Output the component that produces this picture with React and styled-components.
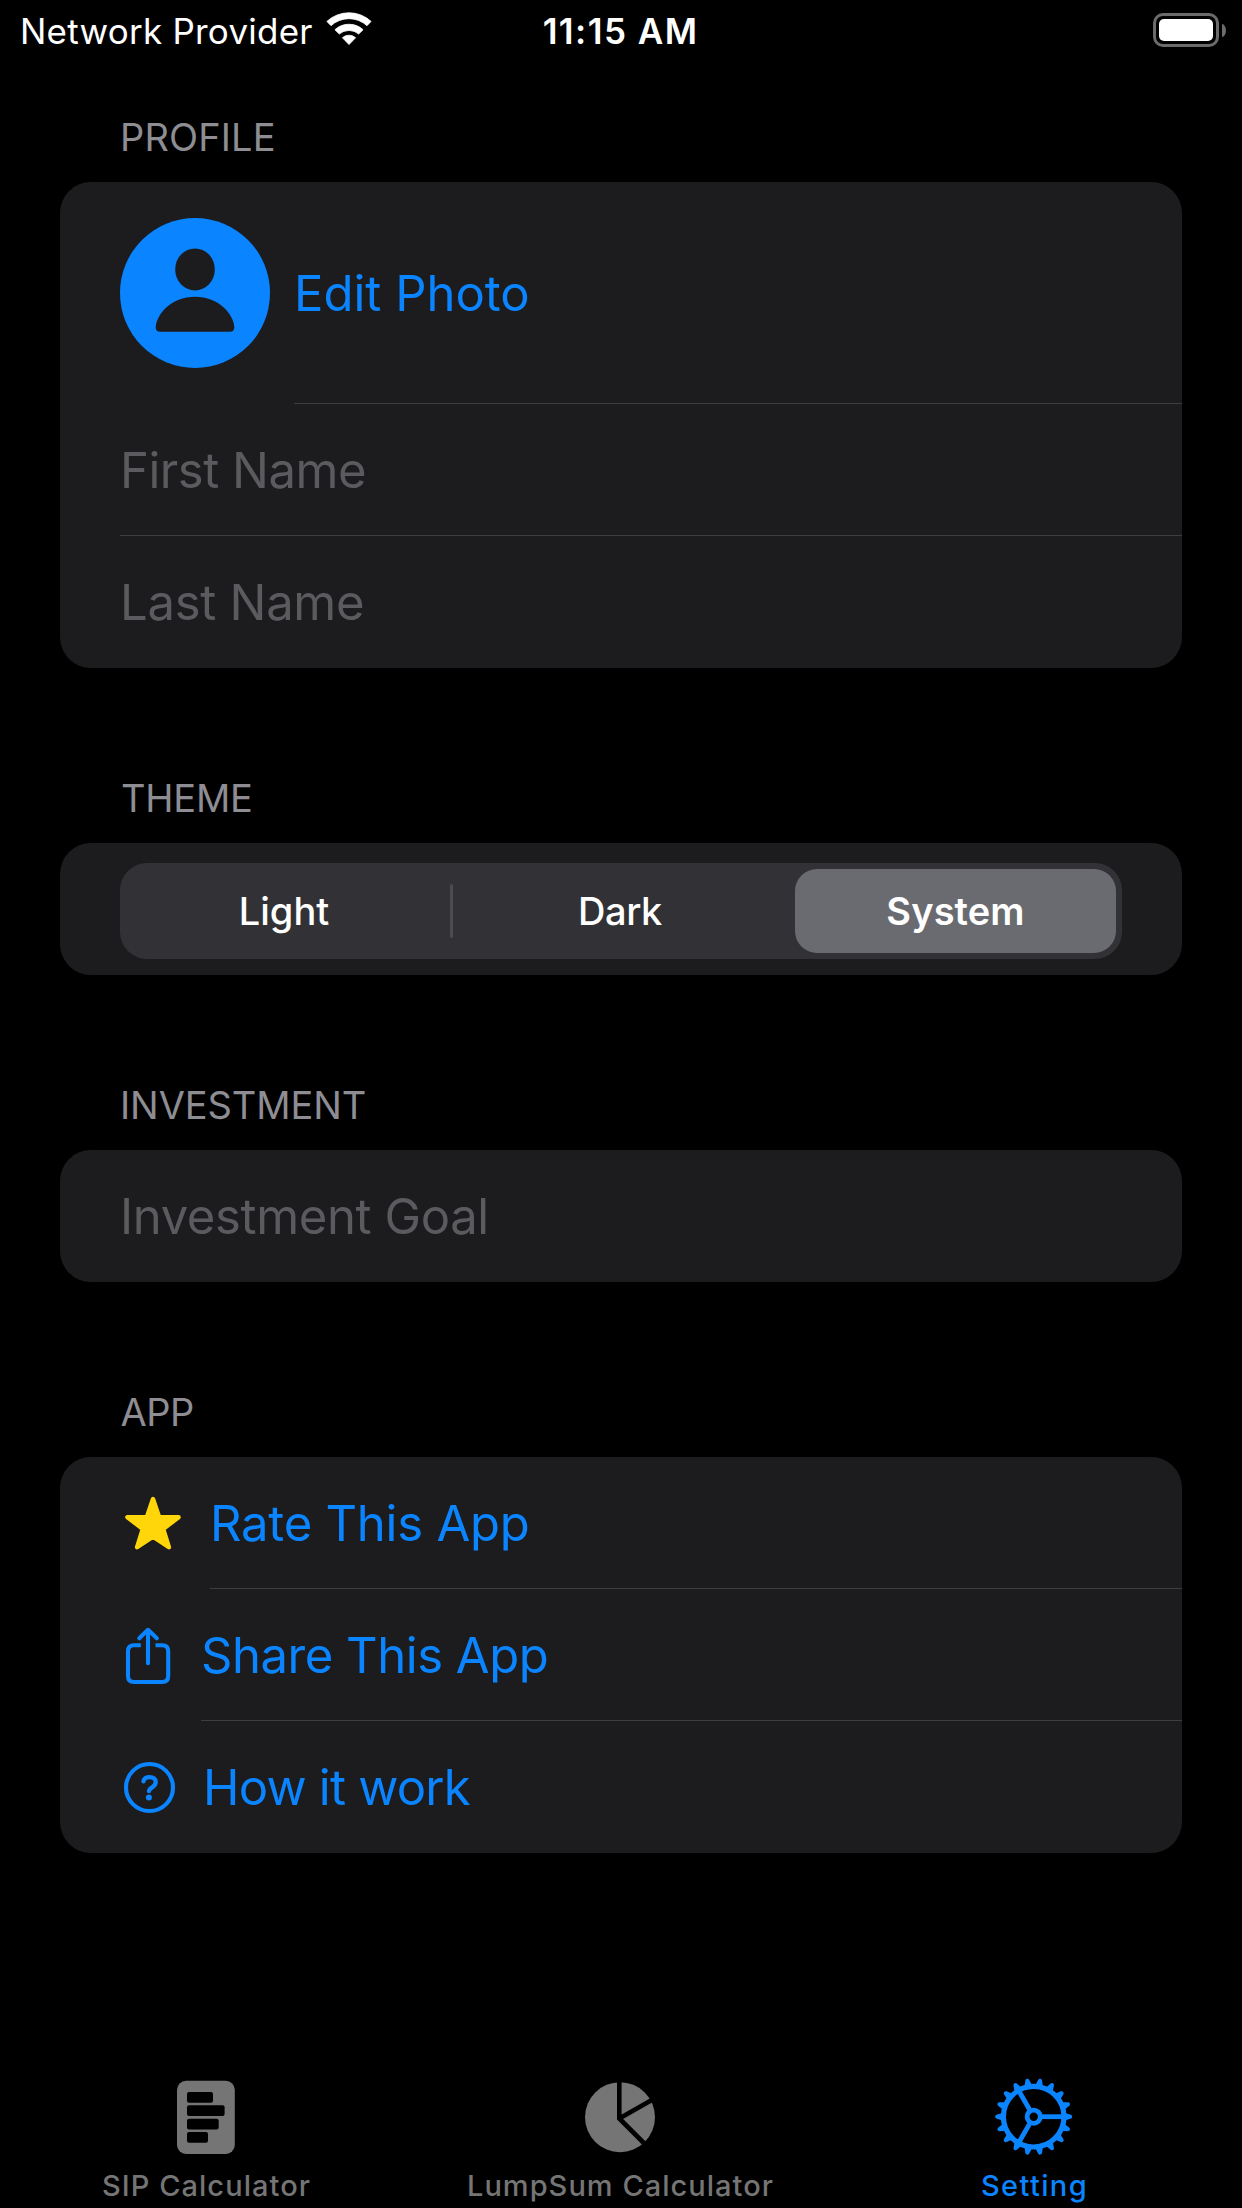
import React, { useState } from 'react';
import styled, { createGlobalStyle } from 'styled-components';

const GlobalStyle = createGlobalStyle`
  *, *::before, *::after { box-sizing: border-box; }
  body {
    margin: 0;
    background: #000;
    font-family: Inter, "Liberation Sans", sans-serif;
  }
  button { font-family: inherit; border: 0; padding: 0; background: none; cursor: pointer; }
`;

const Screen = styled.div`
  display: flex;
  flex-direction: column;
  width: 1242px;
  height: 2208px;
  background: #000;
  color: #fff;
  overflow: hidden;
`;

/* Status bar */

const StatusBar = styled.header`
  display: grid;
  grid-template-columns: 1fr auto 1fr;
  align-items: center;
  height: 62px;
  padding: 0 16px 0 20px;
  font-size: 35px;
  line-height: 62px;
`;

const Carrier = styled.div`
  display: flex;
  align-items: center;
  gap: 13px;
  letter-spacing: 0.24px;

  svg { margin-top: -3px; }
`;

const Clock = styled.time`
  margin-right: 5px;
  font-weight: 600;
  font-size: 35px;
  letter-spacing: 1.45px;
`;

const Battery = styled.div`
  display: flex;
  justify-content: flex-end;
  align-items: center;
  gap: 3px;
  margin-top: -2px;
`;

const BatteryBody = styled.div`
  width: 66px;
  height: 34px;
  padding: 3px;
  border: 3px solid #6b6b6b;
  border-radius: 10px;
`;

const BatteryCharge = styled.div`
  height: 100%;
  border-radius: 5px;
  background: #fff;
`;

const BatteryTip = styled.div`
  width: 4px;
  height: 13px;
  border-radius: 0 4px 4px 0 / 0 6.5px 6.5px 0;
  background: #6b6b6b;
`;

/* Settings form */

const Form = styled.main`
  display: flex;
  flex-direction: column;
  gap: 105px;
  flex: 1;
  padding: 50px 60px 0;
`;

const Section = styled.section`
  display: flex;
  flex-direction: column;
  gap: 20px;
`;

const SectionTitle = styled.h2`
  margin: 0;
  padding-left: ${(p) => p.$inset || 60}px;
  color: #8d8d93;
  font-size: 38px;
  font-weight: 400;
  line-height: 50px;
  letter-spacing: ${(p) => p.$tracking || 0}px;
`;

const Card = styled.div`
  border-radius: 31px;
  background: #1c1c1e;
  overflow: hidden;
`;

const Row = styled.div`
  display: flex;
  height: ${(p) => (p.$tall ? 222 : 132)}px;
  padding-left: 60px;
`;

const RowIcon = styled.div`
  display: flex;
  align-items: center;
  flex: none;
  width: ${(p) => p.$width}px;
`;

const RowContent = styled.div`
  display: flex;
  align-items: center;
  flex: 1;
  box-shadow: ${(p) => (p.$divided ? 'inset 0 -1px 0 #3e3e41' : 'none')};
`;

const Action = styled.button`
  padding-top: 2px;
  color: #0a84ff;
  font-size: 49px;
  line-height: 66px;
  letter-spacing: ${(p) => p.$tracking}px;
`;

const Field = styled.input`
  width: 100%;
  height: 100%;
  padding: 0;
  border: 0;
  outline: 0;
  background: transparent;
  color: #fff;
  font: 400 49px/66px Inter, "Liberation Sans", sans-serif;
  letter-spacing: ${(p) => p.$tracking}px;

  &::placeholder { color: #5a5a5f; opacity: 1; }
`;

const SegmentRow = styled.div`
  height: 132px;
  padding: 20px 60px 16px;
`;

const Segments = styled.div`
  display: grid;
  grid-template-columns: 330px 3px 336px 3px 330px;
  align-items: center;
  height: 96px;
  border-radius: 27px;
  background: #323236;
`;

const Segment = styled.button`
  height: 84px;
  margin: ${(p) => (p.$selected ? '0 6px 0 3px' : '0 2px 0 0')};
  border-radius: 22px;
  background: ${(p) => (p.$selected ? '#6a6b70' : 'transparent')};
  color: #fff;
  font-size: 38px;
  font-weight: ${(p) => (p.$selected ? 600 : 500)};
  line-height: 84px;
  letter-spacing: ${(p) => p.$tracking}px;
`;

const SegmentDivider = styled.span`
  height: 54px;
  border-radius: 2px;
  background: ${(p) => (p.$hidden ? 'transparent' : '#4c4c50')};
`;

/* Tab bar */

const TabBar = styled.nav`
  display: grid;
  grid-template-columns: repeat(3, 1fr);
  height: 147px;
  padding-top: 16px;
`;

const Tab = styled.button`
  display: flex;
  flex-direction: column;
  align-items: center;
  gap: 12px;
  color: ${(p) => (p.$active ? '#0a84ff' : '#757575')};
  font-size: 29px;
  font-weight: 500;
  line-height: 34px;
  letter-spacing: ${(p) => p.$tracking}px;
`;

const TabLabel = styled.span`
  margin-right: 1px;
`;

/* Icons */

const WifiIcon = () => (
  <svg width="46" height="35" viewBox="0 0 46 35" fill="#fff" stroke="#fff" strokeWidth="0.8" strokeLinejoin="round">
    <path d="M0.9 9.4A32.6 32.6 0 0 1 45.1 9.4L41 13.7A26.6 26.6 0 0 0 5 13.7Z" />
    <path d="M8.9 17.7A21 21 0 0 1 37.1 17.7L32.7 22A15 15 0 0 0 13.3 22Z" />
    <path d="M16.4 25.7A10 10 0 0 1 29.6 25.7L23 32.6Z" />
  </svg>
);

const AvatarIcon = () => (
  <svg width="150" height="150" viewBox="0 0 150 150">
    <circle cx="75" cy="75" r="75" fill="#0a84ff" />
    <ellipse cx="75" cy="51.4" rx="19.8" ry="21" fill="#1c1c1e" />
    <path
      d="M40.2 113.7Q35.7 113.7 35.7 109.2C36.3 96.5 51 78.7 75 78.7C99 78.7 113.7 96.5 114.3 109.2Q114.3 113.7 109.8 113.7Z"
      fill="#1c1c1e"
    />
  </svg>
);

const StarIcon = () => (
  <svg width="66" height="60" viewBox="0 0 66 60" fill="#ffd60a" stroke="#ffd60a" strokeWidth="4.4" strokeLinejoin="round">
    <path d="M33 6L39.2 24.2H58.6L43.2 36L48.9 54.2L33 43.6L17.1 54.2L22.8 36L7.4 24.2H26.8Z" />
  </svg>
);

const ShareIcon = () => (
  <svg width="60" height="60" viewBox="0 0 60 60" fill="none" stroke="#0a84ff" strokeWidth="4.1">
    <path d="M20.8 20.3H14Q8 20.3 8 26.3V51Q8 57 14 57H42.2Q48.2 57 48.2 51V26.3Q48.2 20.3 42.2 20.3H35.5" />
    <path d="M28 38.3V5.2M19.3 13.3L28 4.8L36.8 13.3" strokeLinecap="round" strokeLinejoin="round" />
  </svg>
);

const HelpIcon = () => (
  <svg width="60" height="60" viewBox="0 0 60 60" fill="none" stroke="#0a84ff">
    <circle cx="29.5" cy="30.5" r="23.5" strokeWidth="4.1" />
    <path
      d="M23.5 24.3C24 21.6 26.3 20.1 29.6 20.1C33.4 20.1 35.7 22 35.7 25C35.7 27.7 34.3 29 32.2 30.4C29.9 31.8 29 32.8 29 34.2"
      strokeWidth="4.3"
      strokeLinecap="round"
      strokeLinejoin="round"
    />
    <circle cx="28.9" cy="40.6" r="3" fill="#0a84ff" stroke="none" />
  </svg>
);

const DocIcon = () => (
  <svg width="80" height="80" viewBox="0 0 80 80">
    <rect x="10" y="3.8" width="57.8" height="73.2" rx="9" fill="#757575" />
    <rect x="20" y="15" width="26" height="10.7" rx="2" />
    <rect x="20" y="28.3" width="37.6" height="10.7" rx="2" />
    <rect x="20" y="41.7" width="31.7" height="10.7" rx="2" />
    <rect x="20" y="55" width="21" height="10.7" rx="2" />
  </svg>
);

const PieIcon = () => (
  <svg width="80" height="80" viewBox="0 0 80 80">
    <circle cx="39" cy="40.2" r="35" fill="#757575" />
    <path d="M38.3 0V41.5L64.8 68M38.3 41.5L76.5 19.7" fill="none" stroke="#000" strokeWidth="4.6" />
  </svg>
);

const TEETH = Array.from({ length: 18 }, (_, i) => i * 20);
const SPOKES = [0, 120, 240];

const GearIcon = () => (
  <svg width="80" height="80" viewBox="0 0 80 80">
    <g transform="translate(38.7 39.7)" stroke="#0a84ff" fill="none">
      <circle r="30.3" strokeWidth="5.2" />
      <circle r="6.6" strokeWidth="4.8" />
      {SPOKES.map((a) => (
        <path key={a} d="M8 0H30" strokeWidth="4.8" transform={`rotate(${a})`} />
      ))}
      {TEETH.map((a) => (
        <path
          key={a}
          d="M31.5 -3.8L37.2 -1.9Q38.5 -1.4 38.5 0Q38.5 1.4 37.2 1.9L31.5 3.8Z"
          fill="#0a84ff"
          stroke="none"
          transform={`rotate(${a})`}
        />
      ))}
    </g>
  </svg>
);

const THEMES = [
  { name: 'Light', tracking: 0.06 },
  { name: 'Dark', tracking: -0.43 },
  { name: 'System', tracking: 0.1 },
];

const LINKS = [
  { label: 'Rate This App', Icon: StarIcon, slot: 90, tracking: -0.245 },
  { label: 'Share This App', Icon: ShareIcon, slot: 81, tracking: -0.47 },
  { label: 'How it work', Icon: HelpIcon, slot: 83, tracking: -0.75 },
];

const TABS = [
  { label: 'SIP Calculator', Icon: DocIcon, tracking: 1.05 },
  { label: 'LumpSum Calculator', Icon: PieIcon, tracking: 1.03 },
  { label: 'Setting', Icon: GearIcon, tracking: 1.36 },
];

export default function App() {
  const [theme, setTheme] = useState('System');
  const [tab, setTab] = useState('Setting');

  return (
    <>
      <GlobalStyle />
      <Screen>
        <StatusBar>
          <Carrier>
            Network Provider
            <WifiIcon />
          </Carrier>
          <Clock>11:15 AM</Clock>
          <Battery>
            <BatteryBody>
              <BatteryCharge />
            </BatteryBody>
            <BatteryTip />
          </Battery>
        </StatusBar>

        <Form>
          <Section>
            <SectionTitle $tracking={0.13}>PROFILE</SectionTitle>
            <Card>
              <Row $tall>
                <RowIcon $width={174}>
                  <AvatarIcon />
                </RowIcon>
                <RowContent $divided>
                  <Action $tracking={0}>Edit Photo</Action>
                </RowContent>
              </Row>
              <Row>
                <RowContent $divided>
                  <Field placeholder="First Name" $tracking={-0.475} />
                </RowContent>
              </Row>
              <Row>
                <RowContent>
                  <Field placeholder="Last Name" $tracking={-0.28} />
                </RowContent>
              </Row>
            </Card>
          </Section>

          <Section>
            <SectionTitle $tracking={-0.235} $inset={61}>THEME</SectionTitle>
            <Card>
              <SegmentRow>
                <Segments>
                  {THEMES.map(({ name, tracking }, i) => (
                    <React.Fragment key={name}>
                      {i > 0 && <SegmentDivider $hidden={theme === name || theme === THEMES[i - 1].name} />}
                      <Segment $selected={theme === name} $tracking={tracking} onClick={() => setTheme(name)}>
                        {name}
                      </Segment>
                    </React.Fragment>
                  ))}
                </Segments>
              </SegmentRow>
            </Card>
          </Section>

          <Section>
            <SectionTitle $tracking={-0.1}>INVESTMENT</SectionTitle>
            <Card>
              <Row>
                <RowContent>
                  <Field placeholder="Investment Goal" $tracking={-0.38} />
                </RowContent>
              </Row>
            </Card>
          </Section>

          <Section>
            <SectionTitle $tracking={-0.5} $inset={60.5}>APP</SectionTitle>
            <Card>
              {LINKS.map(({ label, Icon, slot, tracking }, i) => (
                <Row key={label}>
                  <RowIcon $width={slot}>
                    <Icon />
                  </RowIcon>
                  <RowContent $divided={i < LINKS.length - 1}>
                    <Action $tracking={tracking}>{label}</Action>
                  </RowContent>
                </Row>
              ))}
            </Card>
          </Section>
        </Form>

        <TabBar>
          {TABS.map(({ label, Icon, tracking }) => (
            <Tab key={label} $active={tab === label} $tracking={tracking} onClick={() => setTab(label)}>
              <Icon />
              <TabLabel>{label}</TabLabel>
            </Tab>
          ))}
        </TabBar>
      </Screen>
    </>
  );
}
